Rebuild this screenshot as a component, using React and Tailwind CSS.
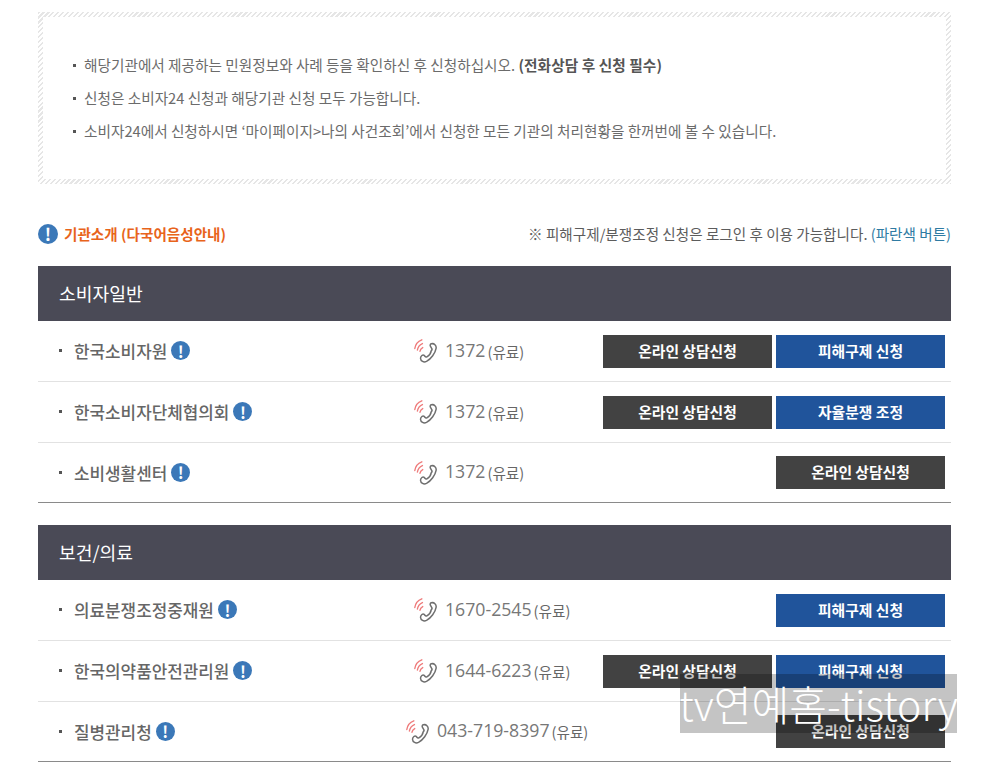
import React from 'react';

const FONT = "font-['Noto_Sans_CJK_KR','Noto_Sans',sans-serif]";

const sections = [
  {
    title: '소비자일반',
    rows: [
      { name: '한국소비자원', tel: '1372', online: true, blue: '피해구제 신청' },
      { name: '한국소비자단체협의회', tel: '1372', online: true, blue: '자율분쟁 조정' },
      { name: '소비생활센터', tel: '1372', darkOnly: true },
    ],
  },
  {
    title: '보건/의료',
    rows: [
      { name: '의료분쟁조정중재원', tel: '1670-2545', blue: '피해구제 신청' },
      { name: '한국의약품안전관리원', tel: '1644-6223', online: true, blue: '피해구제 신청' },
      { name: '질병관리청', tel: '043-719-8397', darkOnly: true, shift: true },
    ],
  },
];

const InfoBadge = ({ large }) => (
  <span className={`inline-flex shrink-0 items-center justify-center rounded-full bg-[#3b78b8] font-bold text-white ${large ? 'h-5 w-5 text-[17px]' : 'h-[19px] w-[19px] text-[16px]'}`}>
    !
  </span>
);

const PhoneIcon = () => (
  <svg width="24" height="24" viewBox="0 0 24 24" fill="none" className="shrink-0">
    <path d="M6.5 19.2c0.2 3 3.2 4.6 6 3.2 4.5-2.4 8.8-8.4 9.6-13 0.5-3-2-5.4-4.8-4.6-1.2 0.4-1.4 1.6-0.8 2.6l1.3 2.2c0.4 0.8 0.2 1.5-0.5 2-0.4 2.4-2.2 5-4.4 6.3-0.8 0.3-1.5 0.1-2-0.6l-0.8-1c-1.2-1-3.5 0.6-3.6 2.9z" stroke="#6f6f6f" strokeWidth="1.5" strokeLinejoin="round" />
    <path d="M0.8 9.5C1.4 5.5 4 2.2 7.8 0.8M3.4 11C3.9 8 5.6 5.8 8.4 4.6M6 12.2c0.3-1.6 1.2-2.8 2.7-3.6" stroke="#ee7b7b" strokeWidth="1.4" strokeLinecap="round" />
  </svg>
);

const Btn = ({ dark, children }) => (
  <span className={`flex h-[33px] w-[169px] items-center justify-center text-[14.8px] font-bold text-white ${dark ? 'bg-[#424242]' : 'bg-[#20549b]'}`}>
    {children}
  </span>
);

const Row = ({ row, last }) => (
  <div className={`flex items-center border-b pl-[21px] pr-[6px] ${last ? 'h-[60px] border-[#8a8a8a]' : 'h-[61px] border-[#e2e2e2]'}`}>
    <div className={`flex items-center ${row.shift ? 'w-[347px]' : 'w-[355px]'}`}>
      <span className="mr-[12px] h-[3px] w-[3px] bg-[#555]" />
      <span className="mr-[4px] text-[16.9px] font-medium text-[#666]">{row.name}</span>
      <InfoBadge />
    </div>
    <div className="flex flex-1 items-center gap-[7px] text-[#777]">
      <PhoneIcon />
      <span className="pb-[1px] font-['Open_Sans',sans-serif] text-[17.7px] leading-none">{row.tel}</span>
      <span className="-ml-[5px] pt-[2px] text-[14.6px] leading-none text-[#666]">(유료)</span>
    </div>
    <div className="flex gap-[4px]">
      {row.online && <Btn dark>온라인 상담신청</Btn>}
      {row.blue && <Btn>{row.blue}</Btn>}
      {row.darkOnly && <Btn dark>온라인 상담신청</Btn>}
    </div>
  </div>
);

const App = () => (
  <div className={`relative h-[773px] w-[997px] overflow-hidden bg-white px-[38px] pt-[12px] ${FONT}`}>
    <div className="w-[913px] bg-[repeating-linear-gradient(135deg,#e6e6e6_0,#e6e6e6_1.5px,#ffffff_1.5px,#ffffff_3.5px)] p-[5px]">
      <ul className="flex h-[162px] flex-col justify-center gap-[13px] bg-white pl-[30px] text-[14.65px] leading-[20px] text-[#6b6b6b]">
        <li className="flex items-center">
          <span className="mr-[8px] h-[3px] w-[3px] bg-[#555]" />
          해당기관에서 제공하는 민원정보와 사례 등을 확인하신 후 신청하십시오.&nbsp;<b className="font-bold tracking-[0.1px] text-[#555]">(전화상담 후 신청 필수)</b>
        </li>
        <li className="flex items-center">
          <span className="mr-[8px] h-[3px] w-[3px] bg-[#555]" />
          신청은 소비자24 신청과 해당기관 신청 모두 가능합니다.
        </li>
        <li className="flex items-center">
          <span className="mr-[8px] h-[3px] w-[3px] bg-[#555]" />
          소비자24에서 신청하시면 ‘마이페이지&gt;나의 사건조회’에서 신청한 모든 기관의 처리현황을 한꺼번에 볼 수 있습니다.
        </li>
      </ul>
    </div>

    <div className="mt-[40px] flex h-[20px] w-[913px] items-center justify-between">
      <div className="flex items-center gap-[6px]">
        <InfoBadge large />
        <span className="text-[14.6px] font-bold text-[#e8641b]">기관소개 (다국어음성안내)</span>
      </div>
      <p className="text-[14.6px] text-[#5c5c5c]">
        ※ 피해구제/분쟁조정 신청은 로그인 후 이용 가능합니다. <span className="text-[#2f7ba3]">(파란색 버튼)</span>
      </p>
    </div>

    <div className="mt-[22px] flex w-[913px] flex-col gap-[22px]">
      {sections.map((section) => (
        <section key={section.title}>
          <h2 className="flex h-[55px] items-center bg-[#4a4a56] pl-[21px] pt-[1px] text-[18.2px] font-normal text-white">{section.title}</h2>
          {section.rows.map((row, i) => (
            <Row key={row.name} row={row} last={i === section.rows.length - 1} />
          ))}
        </section>
      ))}
    </div>

    <div className="absolute left-[680px] top-[674px] flex h-[59px] w-[277px] items-center justify-center overflow-hidden bg-black/[0.23] text-[41px] font-light whitespace-nowrap text-white">
      tv연예홈-tistory
    </div>
  </div>
);

export default App;
